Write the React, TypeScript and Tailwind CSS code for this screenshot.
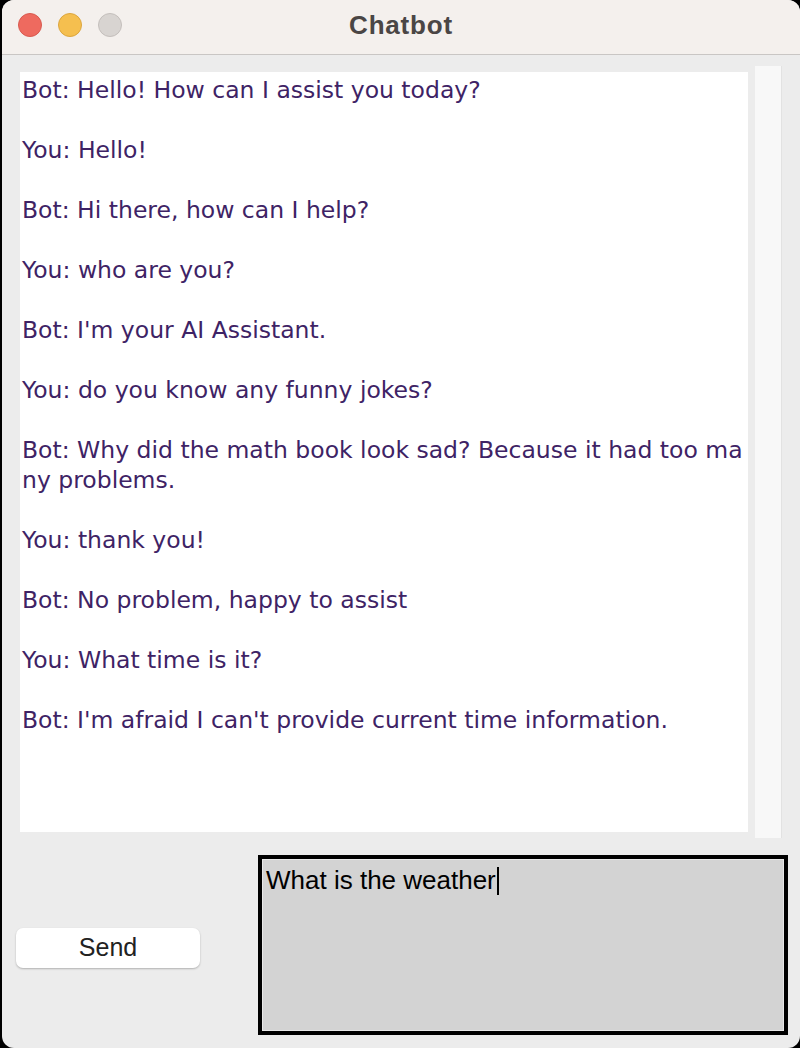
const messages: string[] = [
  "Bot: Hello! How can I assist you today?",
  "You: Hello!",
  "Bot: Hi there, how can I help?",
  "You: who are you?",
  "Bot: I'm your AI Assistant.",
  "You: do you know any funny jokes?",
  "Bot: Why did the math book look sad? Because it had too ma\nny problems.",
  "You: thank you!",
  "Bot: No problem, happy to assist",
  "You: What time is it?",
  "Bot: I'm afraid I can't provide current time information.",
];

export default function App() {
  return (
    <div className="h-[1048px] w-[800px] overflow-hidden bg-black">
      <div className="ml-[2px] flex h-[1048px] flex-col overflow-hidden rounded-[12px] bg-[#ececec]">
        {/* title bar */}
        <div className="relative flex h-[55px] shrink-0 items-center justify-center border-b border-[#c9c6c4] bg-[#f4f0ed]">
          <div className="absolute left-[16px] top-[13px] flex gap-[16px]">
            <span className="h-[24px] w-[24px] rounded-full border border-[#d85a50] bg-[#ee6a5f]" />
            <span className="h-[24px] w-[24px] rounded-full border border-[#dca63e] bg-[#f5bf4f]" />
            <span className="h-[24px] w-[24px] rounded-full border border-[#c4bfbc] bg-[#d8d4d1]" />
          </div>
          <span className="-translate-y-[2px] font-['Liberation_Sans',sans-serif] text-[26px] font-bold tracking-[0.8px] text-[#4a4645]">
            Chatbot
          </span>
        </div>

        {/* chat log */}
        <div className="flex pl-[18px] pt-[11px]">
          <div className="mt-[6px] h-[760px] w-[728px] overflow-hidden bg-white pl-[2px] pt-[3px]">
            {messages.map((m, i) => (
              <p
                key={i}
                className="mb-[30px] whitespace-pre font-['DejaVu_Sans',sans-serif] text-[23.5px] leading-[30px] text-[#3e2365]"
              >
                {m}
              </p>
            ))}
          </div>
          <div className="ml-[7px] h-[772px] w-[27px] border-r border-[#e2e2e2] bg-[#f8f8f8]" />
        </div>

        {/* input row */}
        <div className="flex items-center pl-[14px] pt-[17px]">
          <button className="mt-[6px] h-[40px] w-[184px] rounded-[7px] bg-white font-['Liberation_Sans',sans-serif] text-[25px] text-[#222] shadow-[0_1px_2px_rgba(0,0,0,0.25)]">
            Send
          </button>
          <div className="ml-[58px] h-[180px] w-[530px] border-[4px] border-black">
            <div className="h-full w-full border border-[#e8e8e8] bg-[#d3d3d3] pl-[3px] pt-[1px]">
              <span className="font-['Liberation_Sans',sans-serif] text-[26px] leading-[32px] text-black">
                What is the weather
              </span>
              <span className="ml-[1px] inline-block h-[28px] w-[2px] translate-y-[6px] bg-black" />
            </div>
          </div>
        </div>
      </div>
    </div>
  );
}
